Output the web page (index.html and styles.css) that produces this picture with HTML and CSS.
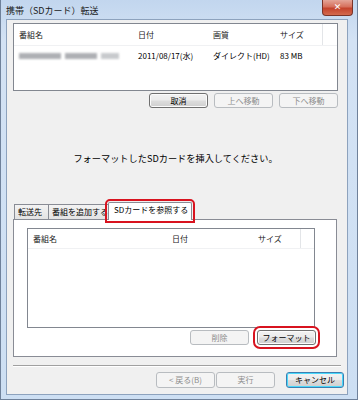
FILE: index.html
```html
<!DOCTYPE html>
<html lang="ja">
<head>
  <meta charset="UTF-8">
  <meta name="viewport" content="width=device-width, initial-scale=1.0">
  <title>携帯（SDカード）転送</title>
  <link rel="stylesheet" href="styles.css">
</head>
<body>
  <div class="window">
    <!-- タイトルバー -->
    <div class="titlebar">
      <span class="title">携帯（SDカード）転送</span>
      <span class="close">✕</span>
    </div>

    <div class="client">
      <!-- 転送リスト -->
      <div class="listbox top-list">
        <div class="list-head">
          <span class="col">番組名</span>
          <span class="col">日付</span>
          <span class="col">画質</span>
          <span class="col">サイズ</span>
          <span class="col"></span>
        </div>
        <div class="list-row">
          <span class="col blurred">
            <span class="blur b1"></span><span class="blur b2"></span><span class="blur b3"></span>
          </span>
          <span class="col">2011/08/17(水)</span>
          <span class="col">ダイレクト(HD)</span>
          <span class="col">83 MB</span>
          <span class="col"></span>
        </div>
      </div>

      <div class="btn-row list-buttons">
        <button class="btn">取消</button>
        <button class="btn" disabled>上へ移動</button>
        <button class="btn" disabled>下へ移動</button>
      </div>

      <p class="message">フォーマットしたSDカードを挿入してください。</p>

      <!-- タブ -->
      <div class="tabs">
        <div class="tab-strip">
          <span class="tab t1">転送先</span>
          <span class="tab t2">番組を追加する</span>
          <span class="tab t3 active marked">SDカードを参照する</span>
        </div>
        <div class="tab-panel">
          <div class="listbox sd-list">
            <div class="list-head">
              <span class="col">番組名</span>
              <span class="col">日付</span>
              <span class="col">サイズ</span>
              <span class="col"></span>
            </div>
          </div>
          <div class="btn-row panel-buttons">
            <button class="btn" disabled>削除</button>
            <button class="btn marked">フォーマット</button>
          </div>
        </div>
      </div>

      <div class="separator"></div>

      <div class="btn-row footer">
        <button class="btn" disabled>&lt; 戻る(B)</button>
        <button class="btn" disabled>実行</button>
        <button class="btn default">キャンセル</button>
      </div>
    </div>
  </div>
</body>
</html>
```

FILE: styles.css
```css
* {
  box-sizing: border-box;
}
body {
  margin: 0;
  background: #fff;
  font-family: "Noto Sans CJK JP", "Liberation Sans", sans-serif;
  font-size: 8px;
  color: #000;
}
.window {
  width: 358px;
  height: 400px;
  background: linear-gradient(to bottom, #c2d6ee 0%, #d3e2f4 10%, #cddff3 100%);
  border: 1px solid #6f819a;
  border-top: none;
  padding: 0 9px 4px 5px;
  display: flex;
  flex-direction: column;
}
.titlebar {
  height: 19px;
  display: flex;
  justify-content: space-between;
  align-items: flex-start;
}
.title {
  margin: 5px 0 0 0;
  font-size: 9px;
  line-height: 11px;
  color: #1a1a1a;
}
.close {
  width: 31px;
  height: 16px;
  margin-right: -5px;
  border: 1px solid #7a3428;
  border-top: none;
  border-radius: 0 0 4px 4px;
  background: linear-gradient(to bottom, #e4a598 0%, #d6705c 45%, #c4432c 55%, #d36a4e 100%);
  color: #fff;
  font-family: "DejaVu Sans", sans-serif;
  font-size: 9px;
  font-weight: bold;
  text-align: center;
  line-height: 15px;
}
.client {
  flex: 1;
  background: #f0f0f0;
  border: 1px solid #8da2bd;
  padding: 3px 0 0 6px;
}

/* リスト */
.listbox {
  background: #fff;
  border: 1px solid #828790;
}
.top-list {
  width: 325px;
  height: 68px;
}
.list-head,
.list-row {
  display: grid;
  align-items: center;
}
.top-list .list-head,
.top-list .list-row {
  grid-template-columns: 119px 75px 67px 48px 1fr;
}
.list-head {
  height: 22px;
  border-bottom: 1px solid #f0f1f3;
}
.sd-list .list-head {
  height: 20px;
}
.list-head .col {
  height: 100%;
  display: flex;
  align-items: center;
  color: #222;
}
.list-head .col:nth-last-child(2) {
  border-right: 1px solid #e3e5e8;
}
.list-row {
  height: 14px;
  margin-top: 3px;
}
.col {
  padding-left: 5px;
  white-space: nowrap;
  line-height: 12px;
}
.blurred {
  display: flex;
  align-items: center;
  gap: 4px;
}
.blur {
  height: 6px;
  background: #aeb0b4;
  filter: blur(1.2px);
}
.b1 { width: 42px; }
.b2 { width: 32px; }
.b3 { width: 18px; background: #c8cacd; }

/* ボタン */
.btn-row {
  display: flex;
  justify-content: flex-end;
  gap: 6px;
}
.btn {
  width: 59px;
  height: 15px;
  padding: 0;
  font-family: inherit;
  font-size: 8px;
  line-height: 12px;
  color: #000;
  border: 1px solid #707070;
  border-radius: 3px;
  background: linear-gradient(to bottom, #f2f2f2 0%, #ebebeb 48%, #dddddd 52%, #cfcfcf 100%);
  box-shadow: inset 0 0 0 1px #fbfbfb;
}
.btn:disabled {
  color: #8d8d8d;
  border-color: #b8bcc0;
  background: #f4f4f4;
  box-shadow: none;
}
.btn.default {
  border-color: #3c7fb1;
  box-shadow: inset 0 0 0 1px #48d8fb;
}
.list-buttons {
  width: 325px;
  margin-top: 2px;
}
.message {
  width: 325px;
  margin: 44px 0 0;
  text-align: center;
  font-size: 9.2px;
  line-height: 13px;
}

/* タブ */
.tabs {
  width: 324px;
  margin-top: 37px;
}
.tab-strip {
  display: flex;
  align-items: flex-end;
  padding-left: 1px;
  height: 17px;
}
.tab {
  height: 15px;
  padding: 0 3px;
  border: 1px solid #898c95;
  border-bottom: none;
  margin-right: -1px;
  background: linear-gradient(to bottom, #f3f3f3, #e3e3e3);
  line-height: 13px;
  white-space: nowrap;
  overflow: hidden;
}
.t1 { width: 35px; }
.t2 { width: 61px; }
.tab.active {
  position: relative;
  z-index: 1;
  width: 84px;
  height: 18px;
  margin-bottom: -1px;
  padding: 0 5px;
  background: #fff;
  line-height: 14px;
  overflow: visible;
}
.marked {
  outline: 2.5px solid #d8131f;
  outline-offset: 1px;
  border-radius: 5px;
}
.tab.active.marked {
  border-radius: 2px 2px 0 0;
  outline-offset: 1.5px;
}
.tab-panel {
  height: 138px;
  background: #fff;
  border: 1px solid #898c95;
  padding: 8px 0 0 13px;
}
.sd-list {
  width: 288px;
  height: 100px;
}
.sd-list .list-head {
  grid-template-columns: 139px 86px 48px 1fr;
}
.panel-buttons {
  width: 289px;
  margin-top: 2px;
  gap: 8px;
}
.btn.marked {
  border-radius: 3px;
  outline-offset: 2px;
}

/* 下部 */
.separator {
  width: 328px;
  height: 2px;
  margin-top: 8px;
  border-top: 1px solid #a0a0a0;
  border-bottom: 1px solid #ffffff;
}
.footer {
  width: 331px;
  margin-top: 5px;
  gap: 1px;
}
.footer .btn {
  height: 16px;
}
.footer .btn.default {
  width: 58px;
  margin-left: 10px;
}
```
